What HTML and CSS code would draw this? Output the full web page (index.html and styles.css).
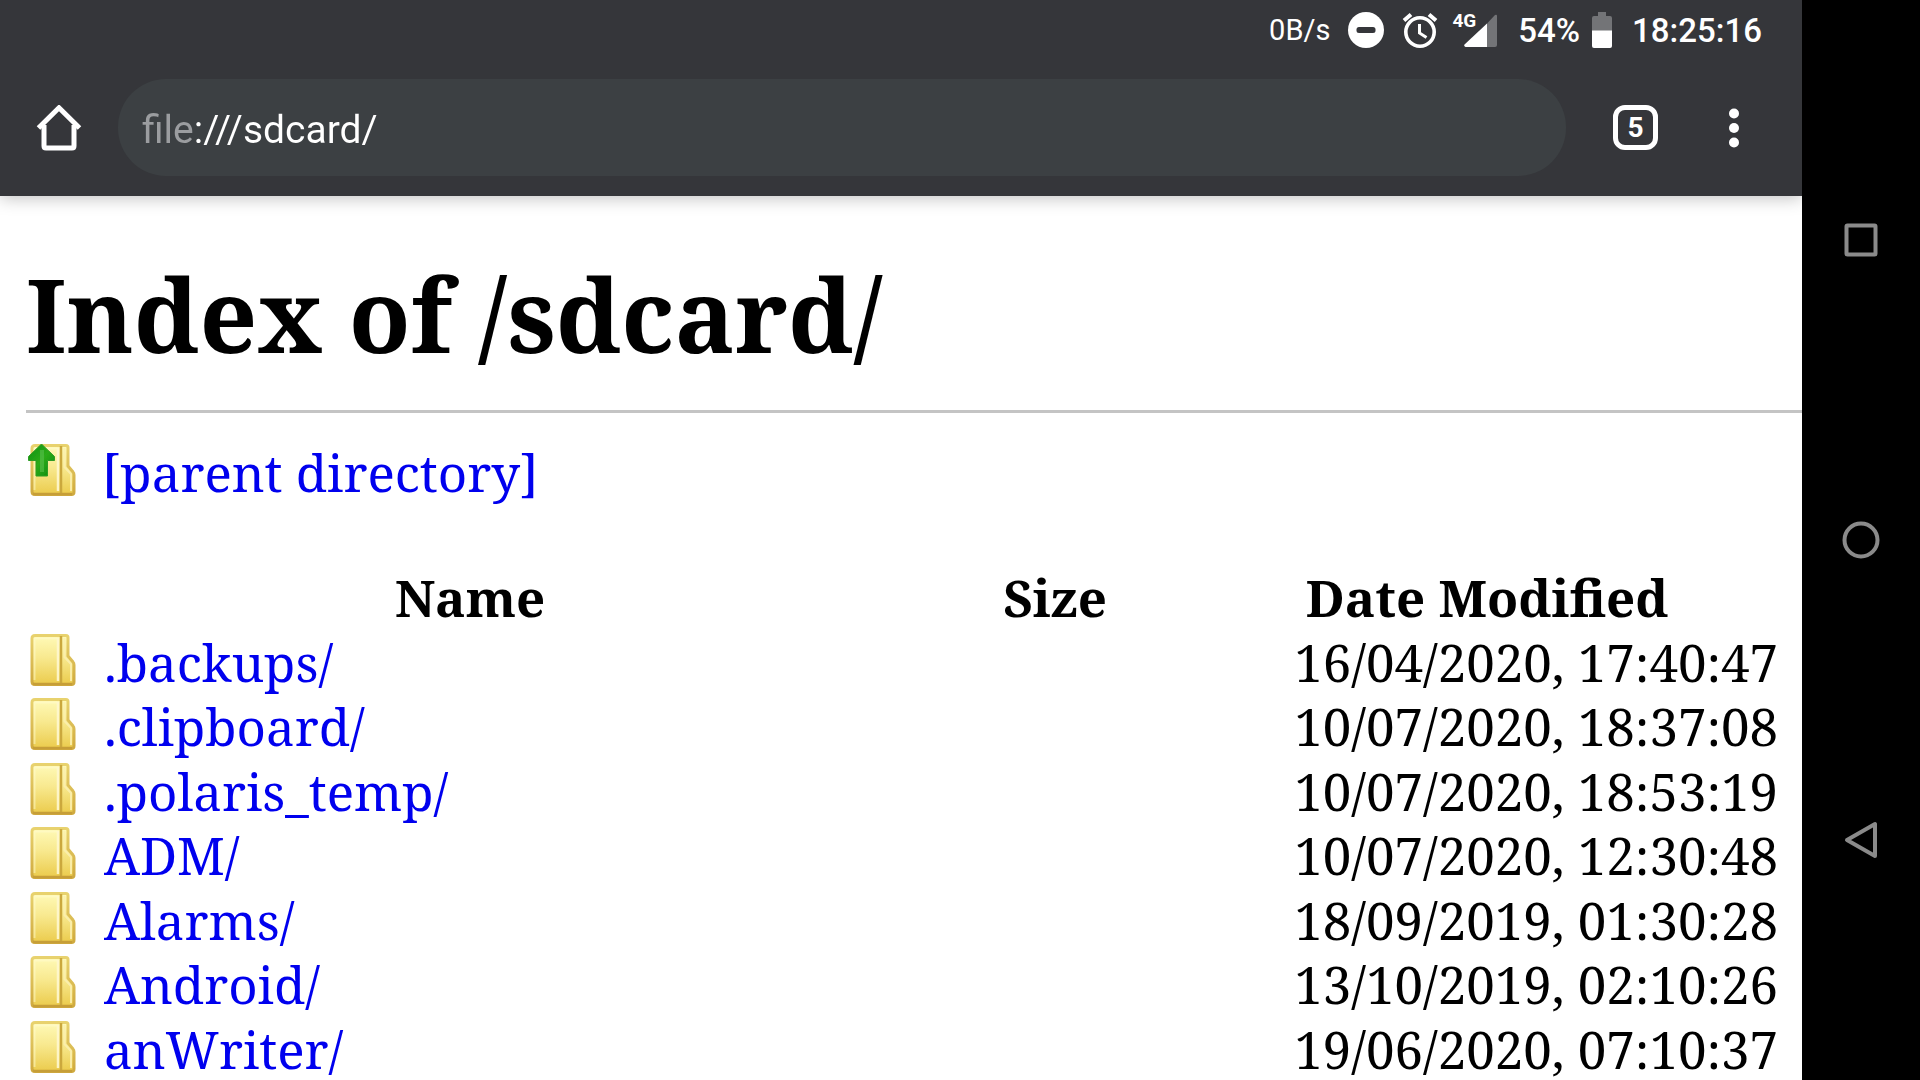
FILE: index.html
```html
<!DOCTYPE html>
<html lang="en-GB">
<head>
<meta charset="utf-8">
<meta name="viewport" content="width=device-width, initial-scale=1">
<title>Index of /sdcard/</title>
<link rel="stylesheet" href="styles.css">
</head>
<body>
<svg class="defs" aria-hidden="true">
  <defs>
    <linearGradient id="cover" x1="0" y1="0" x2="0" y2="1">
      <stop offset="0" stop-color="#fffab8"/><stop offset="0.45" stop-color="#f8e98f"/><stop offset="1" stop-color="#ebcb4c"/>
    </linearGradient>
    <linearGradient id="edge" x1="0" y1="0" x2="0" y2="1">
      <stop offset="0" stop-color="#e8d26e"/><stop offset="1" stop-color="#cfa93e"/>
    </linearGradient>
    <linearGradient id="arrow" x1="0" y1="0" x2="1" y2="1">
      <stop offset="0" stop-color="#0a8f0a"/><stop offset="0.5" stop-color="#2cab1a"/><stop offset="1" stop-color="#0b8a0b"/>
    </linearGradient>
    <filter id="soft" x="-5%" y="-5%" width="110%" height="110%"><feGaussianBlur stdDeviation="0.7"/></filter>
    <symbol id="folder" viewBox="0 0 48 52">
      <g filter="url(#soft)">
        <path d="M7 1.500h31q2 0 2 2V22l5 6q1 1 1 3v17q0 2.500-2.500 2.500H7q-3 0-3-3v-43q0-3 3-3z" fill="url(#cover)" stroke="url(#edge)" stroke-width="3"/>
        <path d="M6.500 46V4.500H29" fill="none" stroke="#fffbd0" stroke-width="2" opacity=".5"/>
        <path d="M30 4v43" stroke="#fff8cf" stroke-width="2.500" opacity=".9"/>
        <path d="M33 2v47" stroke="#cba83e" stroke-width="2.500"/>
        <path d="M36.500 4v19l6.500 7v17" fill="none" stroke="#fbeeae" stroke-width="2" opacity=".9"/>
        <path d="M5 50h39" stroke="#c69e38" stroke-width="2.500"/>
      </g>
    </symbol>
    <symbol id="folder-up" viewBox="0 0 48 52">
      <use href="#folder"/>
      <g filter="url(#soft)">
        <path d="M13.500 0L26.500 12.500v4h-7V32H8V16.500H.5v-4z" fill="url(#arrow)" stroke="#2f9c25" stroke-width="1"/>
        <path d="M14 6v22" stroke="#52bd45" stroke-width="4" opacity=".7"/>
      </g>
    </symbol>
  </defs>
</svg>
<div class="screen">
  <div class="browser">
    <header class="chrome">
      <div class="status">
        <span class="speed">0B/s</span>
        <svg class="dnd" viewBox="0 0 36 36" aria-hidden="true"><circle cx="18" cy="18" r="18" fill="#fff"/><rect x="8.500" y="15" width="19" height="6" rx="2.500" fill="#35363a"/></svg>
        <svg class="alarm" viewBox="0 0 36 36" aria-hidden="true"><g fill="none" stroke="#fff"><circle cx="18" cy="20" r="14.200" stroke-width="3.600"/><path d="M2 8.500L9 2.500M34 8.500L27 2.500" stroke-width="4"/><path d="M17.500 12v9l7 4.500" stroke-width="3"/></g></svg>
        <span class="signal"><span class="gen">4G</span><svg class="bars" viewBox="0 0 33 33" aria-hidden="true"><path d="M23 9.500L31 1q2-1 2 1v29q0 2-2 2h-8z" fill="#737477"/><path d="M23 9.500V33H1.500q-2-1-1-2.500z" fill="#fff"/></svg></span>
        <span class="level">54%</span>
        <svg class="battery" viewBox="0 0 20 36" aria-hidden="true"><path d="M6 0h8v4h4q2 0 2 2v13H0V6q0-2 2-2h4z" fill="#737477"/><path d="M0 18.500h20V34q0 2-2 2H2q-2 0-2-2z" fill="#fff"/></svg>
        <span class="clock">18:25:16</span>
      </div>
      <div class="toolbar">
        <button class="tool home" aria-label="Home"><svg viewBox="0 0 46 46" aria-hidden="true"><path d="M2.500 23L23 2.800 43.500 23" fill="none" stroke="#fff" stroke-width="5"/><path d="M8 20v21q0 2 2 2h26q2 0 2-2V20" fill="none" stroke="#fff" stroke-width="5"/></svg></button>
        <div class="omnibox"><input class="url" type="text" aria-label="Address" value="file:///sdcard/" spellcheck="false"></div>
        <button class="tool tabs" aria-label="Open tabs"><span class="count">5</span></button>
        <button class="tool more" aria-label="More options"><svg viewBox="0 0 10 40" aria-hidden="true"><g fill="#fff"><circle cx="5" cy="5.500" r="5"/><circle cx="5" cy="20" r="5"/><circle cx="5" cy="34.500" r="5"/></g></svg></button>
      </div>
    </header>
    <main class="page">
      <h1 class="title">Index of /sdcard/</h1>
      <a class="entry parent" href="#"><svg class="icon" aria-hidden="true"><use href="#folder-up"/></svg>[parent directory]</a>
      <table class="listing">
        <colgroup><col><col class="col-size"><col class="col-date"></colgroup>
        <thead><tr><th>Name</th><th>Size</th><th>Date Modified</th></tr></thead>
        <tbody>
          <tr><td><a class="entry" href="#"><svg class="icon" aria-hidden="true"><use href="#folder"/></svg>.backups/</a></td><td></td><td class="date">16/04/2020, 17:40:47</td></tr>
          <tr><td><a class="entry" href="#"><svg class="icon" aria-hidden="true"><use href="#folder"/></svg>.clipboard/</a></td><td></td><td class="date">10/07/2020, 18:37:08</td></tr>
          <tr><td><a class="entry" href="#"><svg class="icon" aria-hidden="true"><use href="#folder"/></svg>.polaris_temp/</a></td><td></td><td class="date">10/07/2020, 18:53:19</td></tr>
          <tr><td><a class="entry" href="#"><svg class="icon" aria-hidden="true"><use href="#folder"/></svg>ADM/</a></td><td></td><td class="date">10/07/2020, 12:30:48</td></tr>
          <tr><td><a class="entry" href="#"><svg class="icon" aria-hidden="true"><use href="#folder"/></svg>Alarms/</a></td><td></td><td class="date">18/09/2019, 01:30:28</td></tr>
          <tr><td><a class="entry" href="#"><svg class="icon" aria-hidden="true"><use href="#folder"/></svg>Android/</a></td><td></td><td class="date">13/10/2019, 02:10:26</td></tr>
          <tr><td><a class="entry" href="#"><svg class="icon" aria-hidden="true"><use href="#folder"/></svg>anWriter/</a></td><td></td><td class="date">19/06/2020, 07:10:37</td></tr>
        </tbody>
      </table>
    </main>
  </div>
  <nav class="system" aria-label="System">
    <button class="key" aria-label="Recent apps"><svg viewBox="0 0 40 40" aria-hidden="true"><rect x="5.500" y="5.500" width="29" height="29" rx="1" fill="none" stroke="#8a8a8a" stroke-width="4"/></svg></button>
    <button class="key" aria-label="Home screen"><svg viewBox="0 0 40 40" aria-hidden="true"><circle cx="20" cy="20" r="16.500" fill="none" stroke="#8a8a8a" stroke-width="4"/></svg></button>
    <button class="key" aria-label="Back"><svg viewBox="0 0 40 40" aria-hidden="true"><path d="M34 4v32L6 20z" fill="none" stroke="#8a8a8a" stroke-width="4" stroke-linejoin="round"/></svg></button>
  </nav>
</div>
</body>
</html>
```
FILE: styles.css
```css
* { box-sizing: border-box; }

body {
  margin: 0;
  background: #fff;
  color: #000;
  font-family: "Noto Serif", "Droid Serif", "DejaVu Serif Condensed", "DejaVu Serif", serif;
  font-size: 51px;
}

button { margin: 0; padding: 0; border: 0; background: none; color: inherit; }
svg { display: block; }
.defs { position: absolute; width: 0; height: 0; }

.screen { display: flex; height: 100vh; overflow: hidden; }
.browser { flex: 1; min-width: 0; display: flex; flex-direction: column; }

/* Status bar and toolbar */
.chrome {
  flex: none;
  background: #35363a;
  color: #fff;
  font-family: Roboto, sans-serif;
  box-shadow: 0 2px 16px rgba(0, 0, 0, .25);
}
.status {
  display: flex;
  justify-content: flex-end;
  align-items: center;
  height: 60px;
  padding-right: 40px;
  font-size: 33px;
  font-weight: 500;
}
.speed { margin-right: 18px; font-size: 29px; font-weight: 400; }
.dnd { width: 36px; height: 36px; margin-right: 18px; }
.alarm { width: 36px; height: 36px; margin-right: 14px; }
.signal { display: flex; align-items: flex-start; margin-right: 21px; }
.gen { margin-right: -12px; font-size: 19px; font-weight: 700; line-height: 14px; }
.bars { width: 33px; height: 33px; }
.battery { width: 20px; height: 36px; margin: 0 20px 0 12px; }

.toolbar { display: flex; align-items: flex-start; height: 136px; padding: 19px 39px 0 0; }
.tool { display: flex; align-items: center; justify-content: center; height: 97px; }
.home { width: 118px; }
.home svg { width: 46px; height: 46px; }
.omnibox {
  flex: 1;
  display: flex;
  align-items: center;
  height: 97px;
  padding: 4px 24px 0;
  border-radius: 48px;
  background: #3c4043;
}
.url {
  flex: 1;
  padding: 0;
  border: 0;
  outline: 0;
  font: 400 39px/56px Roboto, sans-serif;
  color: transparent;
  /* scheme is dimmed, the rest of the address is white */
  background: linear-gradient(90deg, #9b9da0 51px, #fff 51px);
  -webkit-background-clip: text;
  background-clip: text;
}
.tabs { width: 139px; }
.count {
  width: 45px;
  height: 45px;
  border: 5px solid #fff;
  border-radius: 12px;
  font: 700 28px/35px Roboto, sans-serif;
}
.more { width: 58px; }
.more svg { width: 10px; height: 40px; }

/* Directory listing */
.page { flex: 1; min-height: 0; overflow: hidden; padding: 62px 0 0 26px; }
.title {
  margin: 0 0 27px;
  padding-bottom: 40px;
  border-bottom: 3px solid #c4c4c4;
  font-size: 101px;
  line-height: 112px;
}
.entry {
  display: flex;
  align-items: center;
  gap: 27px;
  color: #00e;
  text-decoration: none;
  line-height: 64px;
}
.icon { width: 50px; height: 52px; margin: 0 0 4px 1px; }
.parent { gap: 25px; margin-bottom: 61px; }

.listing { width: 100%; padding-right: 24px; table-layout: fixed; border-spacing: 0; border-collapse: separate; line-height: 64px; }
.listing th, .listing td { padding: 0; white-space: nowrap; }
.listing tr { height: 64px; }
.listing tbody tr:nth-child(odd) { height: 65px; }
.col-size { width: 282px; }
.col-date { width: 582px; }
.date { text-align: right; }

/* System navigation */
.system {
  flex: none;
  display: flex;
  flex-direction: column;
  width: 118px;
  padding: 90px 0;
  background: #000;
}
.key { flex: 1; display: flex; align-items: center; justify-content: center; }
.key svg { width: 40px; height: 40px; }
```
